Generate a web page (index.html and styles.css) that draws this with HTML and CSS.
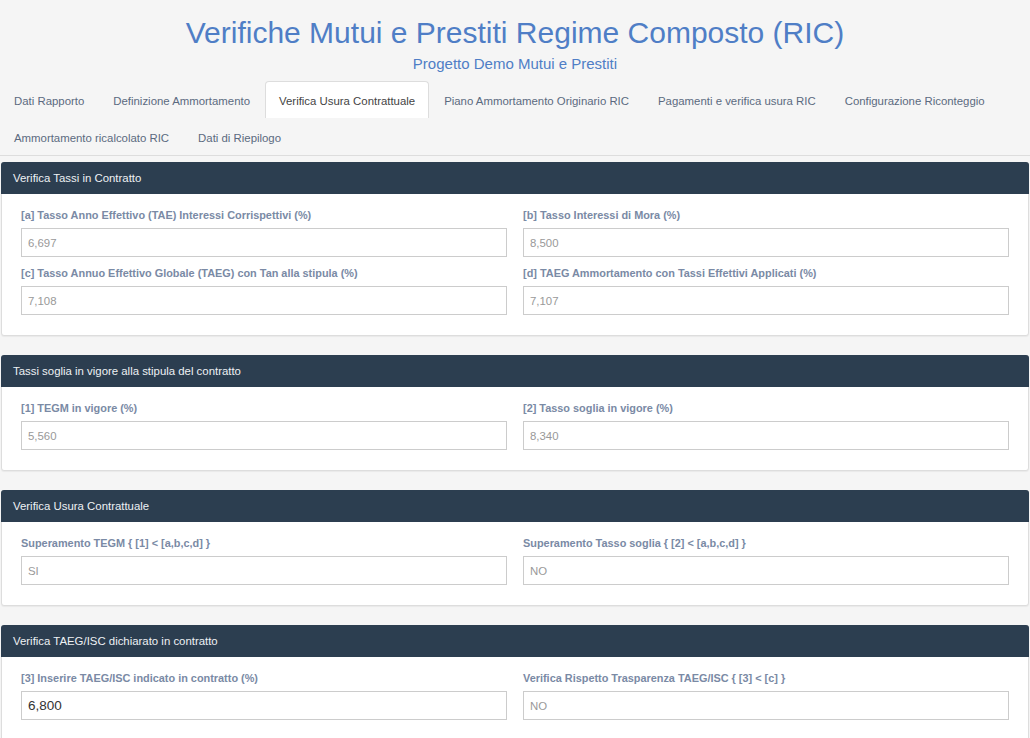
FILE: index.html
```html
<!DOCTYPE html>
<html lang="it">
<head>
    <meta charset="UTF-8">
    <meta name="viewport" content="width=device-width, initial-scale=1.0">
    <title>Verifiche Mutui e Prestiti</title>
    <link rel="stylesheet" href="styles.css">
</head>
<body>
<div id="testata">
    <h1 class="titolo">Verifiche Mutui e Prestiti Regime Composto (RIC)</h1>
    <div class="sottotitolo">Progetto Demo Mutui e Prestiti</div>
</div>

<ul class="schede">
    <li class="scheda">Dati Rapporto</li>
    <li class="scheda">Definizione Ammortamento</li>
    <li class="scheda attiva">Verifica Usura Contrattuale</li>
    <li class="scheda">Piano Ammortamento Originario RIC</li>
    <li class="scheda">Pagamenti e verifica usura RIC</li>
    <li class="scheda">Configurazione Riconteggio</li>
    <li class="scheda">Ammortamento ricalcolato RIC</li>
    <li class="scheda">Dati di Riepilogo</li>
</ul>

<div class="pannello">
    <div class="intestazione">Verifica Tassi in Contratto</div>
    <div class="corpo">
        <div class="campo">
            <label>[a] Tasso Anno Effettivo (TAE) Interessi Corrispettivi (%)</label>
            <input type="text" value="6,697" readonly>
        </div>
        <div class="campo">
            <label>[b] Tasso Interessi di Mora (%)</label>
            <input type="text" value="8,500" readonly>
        </div>
        <div class="campo">
            <label>[c] Tasso Annuo Effettivo Globale (TAEG) con Tan alla stipula (%)</label>
            <input type="text" value="7,108" readonly>
        </div>
        <div class="campo">
            <label>[d] TAEG Ammortamento con Tassi Effettivi Applicati (%)</label>
            <input type="text" value="7,107" readonly>
        </div>
    </div>
</div>

<div class="pannello">
    <div class="intestazione">Tassi soglia in vigore alla stipula del contratto</div>
    <div class="corpo">
        <div class="campo">
            <label>[1] TEGM in vigore (%)</label>
            <input type="text" value="5,560" readonly>
        </div>
        <div class="campo">
            <label>[2] Tasso soglia in vigore (%)</label>
            <input type="text" value="8,340" readonly>
        </div>
    </div>
</div>

<div class="pannello">
    <div class="intestazione">Verifica Usura Contrattuale</div>
    <div class="corpo">
        <div class="campo">
            <label>Superamento TEGM { [1] &lt; [a,b,c,d] }</label>
            <input type="text" value="SI" readonly>
        </div>
        <div class="campo">
            <label>Superamento Tasso soglia { [2] &lt; [a,b,c,d] }</label>
            <input type="text" value="NO" readonly>
        </div>
    </div>
</div>

<div class="pannello">
    <div class="intestazione">Verifica TAEG/ISC dichiarato in contratto</div>
    <div class="corpo">
        <div class="campo">
            <label>[3] Inserire TAEG/ISC indicato in contratto (%)</label>
            <input type="text" class="modificabile" value="6,800">
        </div>
        <div class="campo">
            <label>Verifica Rispetto Trasparenza TAEG/ISC { [3] &lt; [c] }</label>
            <input type="text" value="NO" readonly>
        </div>
    </div>
</div>
</body>
</html>
```

FILE: styles.css
```css
body {
    margin: 0;
    background-color: #f5f5f5;
    font-family: "Liberation Sans", Arial, sans-serif;
    font-size: 11.4px;
    color: #333;
}

#testata {
    text-align: center;
    padding-top: 16px;
}

.titolo {
    margin: 0;
    font-size: 30px;
    font-weight: normal;
    line-height: 33px;
    color: #4f7ec6;
}

.sottotitolo {
    font-size: 15px;
    line-height: 20px;
    margin-top: 5px;
    color: #4f7ec6;
}

.schede {
    list-style: none;
    margin: 7px 0 0 0;
    padding: 0;
    display: flex;
    flex-wrap: wrap;
    border-bottom: 1px solid #ddd;
}

.scheda {
    padding: 0 13px;
    margin-right: 1px;
    height: 36px;
    line-height: 38px;
    color: #5b6a80;
    border: 1px solid transparent;
    border-bottom: 0;
    border-radius: 4px 4px 0 0;
}

.scheda.attiva {
    background-color: #fff;
    border-color: #ddd;
    color: #444;
}

.pannello {
    margin: 6px 1px 19px 1px;
    background-color: #fff;
    border: 1px solid #ddd;
    border-radius: 3px;
    box-shadow: 0 1px 1px rgba(0, 0, 0, 0.05);
}

.intestazione {
    background-color: #2c3e50;
    color: #eef1f4;
    height: 32px;
    line-height: 32px;
    padding: 0 12px;
    margin: -1px -1px 0 -1px;
    border-radius: 3px 3px 0 0;
}

.corpo {
    display: grid;
    grid-template-columns: 1fr 1fr;
    column-gap: 16px;
    padding: 13px 19px 12px 19px;
}

.campo {
    margin-bottom: 8px;
}

.campo label {
    display: block;
    font-size: 10.9px;
    font-weight: bold;
    line-height: 16px;
    margin-bottom: 5px;
    color: #7a8aa5;
}

.campo input {
    display: block;
    box-sizing: border-box;
    width: 100%;
    height: 29px;
    margin: 0;
    padding: 0 6px;
    border: 1px solid #ccc;
    font-family: "Liberation Sans", Arial, sans-serif;
    font-size: 11.4px;
    color: #999;
    background-color: #fff;
    outline: none;
}

.campo input.modificabile {
    font-size: 13.5px;
    color: #333;
}
```
